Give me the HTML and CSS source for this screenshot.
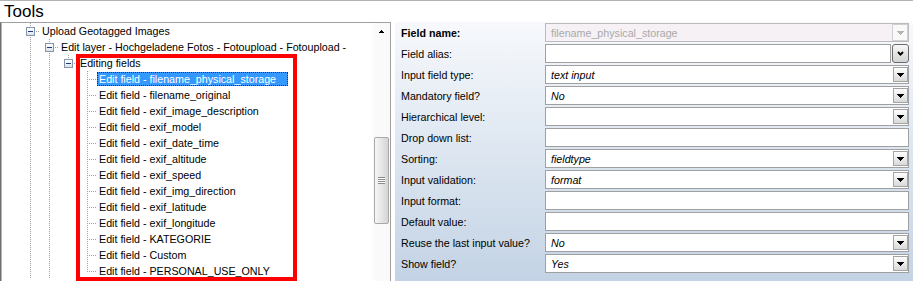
FILE: index.html
```html
<!DOCTYPE html>
<html lang="de">
<head>
<meta charset="utf-8">
<title>Tools</title>
<link rel="stylesheet" href="styles.css">
</head>
<body>
<div class="app">
  <div class="title">Tools</div>
  <div class="main">
    <div class="tree">
      <div class="tree-body">
        <div class="node"><span class="g vh"><span class="box"></span></span><span class="txt">Upload Geotagged Images</span></div>
        <div class="node"><span class="g v"></span><span class="g vh"><span class="box"></span></span><span class="txt">Edit layer - Hochgeladene Fotos - Fotoupload - Fotoupload -</span></div>
        <div class="node"><span class="g v"></span><span class="g v"></span><span class="g th"><span class="box"></span></span><span class="txt">Editing fields</span></div>
        <div class="node"><span class="g v"></span><span class="g v"></span><span class="g"></span><span class="g vh"></span><span class="txt sel">Edit field - filename_physical_storage</span></div>
        <div class="node"><span class="g v"></span><span class="g v"></span><span class="g"></span><span class="g vh"></span><span class="txt">Edit field - filename_original</span></div>
        <div class="node"><span class="g v"></span><span class="g v"></span><span class="g"></span><span class="g vh"></span><span class="txt">Edit field - exif_image_description</span></div>
        <div class="node"><span class="g v"></span><span class="g v"></span><span class="g"></span><span class="g vh"></span><span class="txt">Edit field - exif_model</span></div>
        <div class="node"><span class="g v"></span><span class="g v"></span><span class="g"></span><span class="g vh"></span><span class="txt">Edit field - exif_date_time</span></div>
        <div class="node"><span class="g v"></span><span class="g v"></span><span class="g"></span><span class="g vh"></span><span class="txt">Edit field - exif_altitude</span></div>
        <div class="node"><span class="g v"></span><span class="g v"></span><span class="g"></span><span class="g vh"></span><span class="txt">Edit field - exif_speed</span></div>
        <div class="node"><span class="g v"></span><span class="g v"></span><span class="g"></span><span class="g vh"></span><span class="txt">Edit field - exif_img_direction</span></div>
        <div class="node"><span class="g v"></span><span class="g v"></span><span class="g"></span><span class="g vh"></span><span class="txt">Edit field - exif_latitude</span></div>
        <div class="node"><span class="g v"></span><span class="g v"></span><span class="g"></span><span class="g vh"></span><span class="txt">Edit field - exif_longitude</span></div>
        <div class="node"><span class="g v"></span><span class="g v"></span><span class="g"></span><span class="g vh"></span><span class="txt">Edit field - KATEGORIE</span></div>
        <div class="node"><span class="g v"></span><span class="g v"></span><span class="g"></span><span class="g vh"></span><span class="txt">Edit field - Custom</span></div>
        <div class="node"><span class="g v"></span><span class="g v"></span><span class="g"></span><span class="g th"></span><span class="txt">Edit field - PERSONAL_USE_ONLY</span></div>
      </div>
      <div class="vscroll">
        <div class="sbtn"><svg width="5" height="3" viewBox="0 0 5 3"><path d="M2 0h1v1h1v1h1v1h-5v-1h1v-1h1z" fill="#000"/></svg></div>
        <div class="track"><div class="thumb"><span class="grip"></span></div></div>
      </div>
      <div class="annotation"></div>
    </div>
    <div class="props">
      <div class="prow"><div class="plabel strong">Field name:</div><div class="pval disabled"><span class="vtext">filename_physical_storage</span><span class="ddbtn off"><svg width="7" height="4" viewBox="0 0 7 4"><path d="M0 0h7v1h-1v1h-1v1h-1v1h-1v-1h-1v-1h-1v-1h-1z"/></svg></span></div></div>
      <div class="prow"><div class="plabel">Field alias:</div><div class="pval"><span class="vtext"></span></div><span class="altbtn"><svg width="7" height="5" viewBox="0 0 7 5"><polyline points="1,1 3.5,3.6 6,1" fill="none" stroke="#000" stroke-width="1.9"/></svg></span></div>
      <div class="prow"><div class="plabel">Input field type:</div><div class="pval"><span class="vtext em">text input</span><span class="ddbtn"><svg width="7" height="4" viewBox="0 0 7 4"><path d="M0 0h7v1h-1v1h-1v1h-1v1h-1v-1h-1v-1h-1v-1h-1z"/></svg></span></div></div>
      <div class="prow"><div class="plabel">Mandatory field?</div><div class="pval"><span class="vtext em">No</span><span class="ddbtn"><svg width="7" height="4" viewBox="0 0 7 4"><path d="M0 0h7v1h-1v1h-1v1h-1v1h-1v-1h-1v-1h-1v-1h-1z"/></svg></span></div></div>
      <div class="prow"><div class="plabel">Hierarchical level:</div><div class="pval"><span class="vtext"></span><span class="ddbtn"><svg width="7" height="4" viewBox="0 0 7 4"><path d="M0 0h7v1h-1v1h-1v1h-1v1h-1v-1h-1v-1h-1v-1h-1z"/></svg></span></div></div>
      <div class="prow"><div class="plabel">Drop down list:</div><div class="pval"><span class="vtext"></span></div></div>
      <div class="prow"><div class="plabel">Sorting:</div><div class="pval"><span class="vtext em">fieldtype</span><span class="ddbtn"><svg width="7" height="4" viewBox="0 0 7 4"><path d="M0 0h7v1h-1v1h-1v1h-1v1h-1v-1h-1v-1h-1v-1h-1z"/></svg></span></div></div>
      <div class="prow"><div class="plabel">Input validation:</div><div class="pval"><span class="vtext em">format</span><span class="ddbtn"><svg width="7" height="4" viewBox="0 0 7 4"><path d="M0 0h7v1h-1v1h-1v1h-1v1h-1v-1h-1v-1h-1v-1h-1z"/></svg></span></div></div>
      <div class="prow"><div class="plabel">Input format:</div><div class="pval"><span class="vtext"></span></div></div>
      <div class="prow"><div class="plabel">Default value:</div><div class="pval"><span class="vtext"></span></div></div>
      <div class="prow"><div class="plabel">Reuse the last input value?</div><div class="pval"><span class="vtext em">No</span><span class="ddbtn"><svg width="7" height="4" viewBox="0 0 7 4"><path d="M0 0h7v1h-1v1h-1v1h-1v1h-1v-1h-1v-1h-1v-1h-1z"/></svg></span></div></div>
      <div class="prow"><div class="plabel">Show field?</div><div class="pval"><span class="vtext em">Yes</span><span class="ddbtn"><svg width="7" height="4" viewBox="0 0 7 4"><path d="M0 0h7v1h-1v1h-1v1h-1v1h-1v-1h-1v-1h-1v-1h-1z"/></svg></span></div></div>
    </div>
  </div>
</div>
</body>
</html>
```

FILE: styles.css
```css
:root {
  --dv: repeating-linear-gradient(to bottom, #a0a0a0 0 1px, transparent 1px 2px);
  --dh: repeating-linear-gradient(to right, #a0a0a0 0 1px, transparent 1px 2px);
}

html, body {
  margin: 0;
  padding: 0;
}

body {
  width: 913px;
  height: 281px;
  overflow: hidden;
  background: #ffffff;
  font-family: "Liberation Sans", Arial, sans-serif;
  font-size: 10.7px;
  color: #000000;
}

.app {
  height: 281px;
  display: flex;
  flex-direction: column;
}

.title {
  flex: none;
  height: 22px;
  box-sizing: border-box;
  border-top: 1px solid #b3b3b3;
  padding-left: 4px;
  font-size: 17px;
  line-height: 21px;
}

.main {
  flex: 1;
  min-height: 0;
  display: flex;
  gap: 4px;
}

/* ---------- tree ---------- */
.tree {
  position: relative;
  flex: none;
  width: 391px;
  box-sizing: border-box;
  border: 1px solid #a0a0a0;
  border-bottom: none;
  border-left-color: #6f6f6f;
  box-shadow: inset 1px 0 #b4b4b4;
  display: flex;
  overflow: hidden;
  background: #ffffff;
}

.tree-body {
  flex: 1;
  min-width: 0;
  padding-left: 20px;
  overflow: hidden;
}

.node {
  display: flex;
  align-items: center;
  height: 16px;
}

.g {
  flex: none;
  width: 19px;
  height: 16px;
  display: flex;
  align-items: flex-start;
}

.v {
  background: var(--dv) 9px 0 / 1px 16px no-repeat;
}

.vh {
  background: var(--dv) 9px 0 / 1px 16px no-repeat, var(--dh) 9px 8px / 10px 1px no-repeat;
}

.th {
  background: var(--dv) 9px 0 / 1px 8px no-repeat, var(--dh) 9px 8px / 10px 1px no-repeat;
}

.box {
  width: 9px;
  height: 9px;
  margin: 4px 0 0 5px;
  box-sizing: border-box;
  border: 1px solid #8595ad;
  background:
    linear-gradient(#1d3a78, #1d3a78) center / 5px 1px no-repeat,
    linear-gradient(#ffffff, #dde2ea);
}

.txt {
  padding-left: 2px;
  line-height: 16px;
  white-space: nowrap;
}

.txt.sel {
  height: 14px;
  box-sizing: border-box;
  line-height: 12px;
  padding: 0 11px 0 1px;
  border: 1px dotted #0b2f66;
  background: #3399ff;
  color: #ffffff;
}

.vscroll {
  flex: none;
  width: 17px;
  display: flex;
  flex-direction: column;
  background: #fafafa;
}

.sbtn {
  flex: none;
  height: 17px;
  display: flex;
  align-items: center;
  justify-content: center;
}

.track {
  flex: 1;
  padding-top: 97px;
}

.thumb {
  height: 87px;
  margin: 0 1px;
  box-sizing: border-box;
  border: 1px solid #a9a9a9;
  border-radius: 2px;
  background: linear-gradient(to right, #f6f6f6, #e6e6e6 50%, #d4d4d4);
  display: flex;
  align-items: center;
  justify-content: center;
}

.grip {
  width: 7px;
  height: 7px;
  background: repeating-linear-gradient(to bottom, #8a8a8a 0 1px, #ffffff 1px 2px);
}

.annotation {
  position: absolute;
  left: 75px;
  top: 31px;
  width: 221px;
  height: 227px;
  box-sizing: border-box;
  border: 4px solid #ff0000;
  pointer-events: none;
}

/* ---------- property grid ---------- */
.props {
  flex: 1;
  min-width: 0;
  box-sizing: border-box;
  padding: 1px 4px 0 0;
  background: linear-gradient(#f7f9fc, #c3d3e5);
}

.prow {
  display: flex;
  height: 19px;
  margin-bottom: 2px;
}

.plabel {
  flex: none;
  width: 150px;
  box-sizing: border-box;
  padding: 2px 0 0 6px;
  line-height: 17px;
  white-space: nowrap;
}

.plabel.strong {
  font-weight: bold;
}

.pval {
  flex: 1;
  min-width: 0;
  height: 19px;
  box-sizing: border-box;
  border: 1px solid #a0a0a0;
  background: #ffffff;
  display: flex;
  align-items: center;
  padding-left: 5px;
}

.vtext {
  flex: 1;
  line-height: 15px;
  padding-top: 2px;
  white-space: nowrap;
}

.vtext.em {
  font-style: italic;
}

.pval.disabled {
  background: #f5f1f5;
  border-color: #bdb9bd;
  color: #a9a9a9;
}

.ddbtn {
  flex: none;
  width: 15px;
  height: 15px;
  box-sizing: border-box;
  border: 1px solid #a4a4a4;
  background: linear-gradient(#fefefe, #d9d9d9);
  display: flex;
  align-items: center;
  justify-content: center;
}

.ddbtn path {
  fill: #000000;
}

.ddbtn.off {
  width: 16px;
  height: 17px;
  border-color: #d0d0d0;
  background: #faf9fa;
}

.ddbtn.off path {
  fill: #b4b4b4;
}

.altbtn {
  flex: none;
  width: 17px;
  height: 19px;
  margin-left: 1px;
  box-sizing: border-box;
  border: 1px solid #6a6a6a;
  border-radius: 3px;
  background: linear-gradient(#f7f7f7, #d3d3d3);
  display: flex;
  align-items: center;
  justify-content: center;
}
```
